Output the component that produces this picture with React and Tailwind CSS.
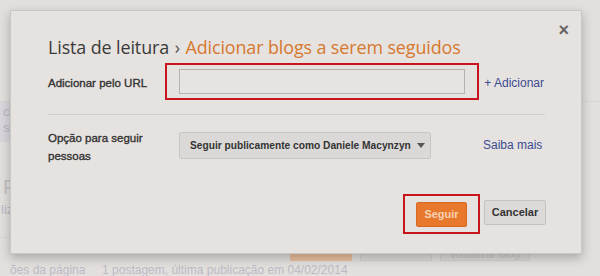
import React from "react";

const BackgroundPage = () => {
  return (
    <div className="h-[276px] w-[600px] bg-[#e2dfdc] text-[#b9b6c2] overflow-hidden">
      <div className="h-[28px]" />
      <div className="h-[74px] border-b border-[#d8d5d2]" />
      <div className="h-[40px] w-[40px] bg-[#d9d7dc] text-[13px] leading-[16px] pl-[3px] pt-[2px] font-['Liberation_Sans',sans-serif]">
        <div>c</div>
        <div>s</div>
      </div>
      <div className="h-[34px]" />
      <div className="pl-[3px] text-[20px] leading-[22px] text-[#c5c2c0] font-['Liberation_Sans',sans-serif]">F</div>
      <div className="pl-[1px] pt-[2px] text-[13px] text-[#bbb8c6] font-['Liberation_Sans',sans-serif]">liz</div>
      <div className="h-[18px] border-b border-[#d8d5d2] w-[40px]" />
      <div className="flex items-start gap-[8px] pl-[290px] pt-[9px]">
        <div className="h-[14px] w-[62px] bg-[#eabf9f]" />
        <div className="h-[14px] w-[72px] bg-[#dddbd9] border border-[#d3d1cf]" />
        <div className="h-[14px] w-[90px] bg-[#dddbd9] border border-[#d3d1cf] text-[11px] leading-[12px] text-[#c9c7c5] text-center font-['Liberation_Sans',sans-serif]">visualizar blog</div>
      </div>
      <div className="pl-[10px] pt-[2px] text-[12px] leading-[14px] text-[#bdbac6] font-['Liberation_Sans',sans-serif] whitespace-nowrap">
        ões da página &nbsp;&nbsp;&nbsp; 1 postagem, última publicação em 04/02/2014
      </div>
    </div>
  );
};

const App = () => {
  return (
    <div className="relative w-[600px] h-[276px] overflow-hidden font-['Liberation_Sans',sans-serif]">
      <BackgroundPage />

      {/* dialog */}
      <div className="absolute left-[10px] top-[10px] w-[572px] h-[244px] bg-[#e5e2df] border border-[#c9c6c3] shadow-[0_4px_10px_rgba(0,0,0,0.25)]">
        <button className="absolute right-[12px] top-[10px] text-[18px] leading-[18px] text-[#666] font-bold">×</button>

        <div className="pl-[37px] pt-[24px] pr-[37px]">
          <h2 className="text-[17.9px] leading-[24px] tracking-[-0.1px] font-['Open_Sans',sans-serif] text-[#3a3a3a] whitespace-nowrap">
            Lista de leitura <span className="text-[#555] px-[1px]">›</span>{" "}
            <span className="text-[#d7782e]">Adicionar blogs a serem seguidos</span>
          </h2>

          <div className="flex items-start mt-[4px]">
            <div className="w-[117px] pt-[12px] text-[11.5px] text-[#333] [-webkit-text-stroke:0.35px_#333] whitespace-nowrap">Adicionar pelo URL</div>
            <div className="border-2 border-[#c8141c] px-[12px] py-[4px] w-[315px]">
              <input type="text" className="block w-full h-[25px] bg-[#e6e3e0] border border-[#b5b3b1] outline-none" />
            </div>
            <a className="ml-[5px] pt-[11px] text-[12px] text-[#3c4a92] whitespace-nowrap">+ Adicionar</a>
          </div>

          <div className="h-px bg-[#cfccca] mt-[14px] w-[497px]" />

          <div className="flex items-start mt-[17px]">
            <div className="w-[131px] -mt-[3px] text-[11.5px] leading-[18px] text-[#333] [-webkit-text-stroke:0.35px_#333]">
              Opção para seguir<br />pessoas
            </div>
            <button className="h-[27px] w-[252px] flex items-center justify-between pl-[10px] pr-[11px] rounded-[2px] bg-[#dbd9d7] border border-[#c9c7c5] text-[10.2px] font-bold text-[#333] whitespace-nowrap">
              <span>Seguir publicamente como Daniele Macynzyn</span>
              <svg width="8" height="5" viewBox="0 0 8 5" className="shrink-0 ml-[6px]"><path d="M0 0 L8 0 L4 5 Z" fill="#555" /></svg>
            </button>
            <a className="ml-[52px] pt-[4px] text-[12px] text-[#3c4a92] whitespace-nowrap">Saiba mais</a>
          </div>

          <div className="flex items-start justify-end gap-[4px] mt-[29px] w-[498px]">
            <div className="border-2 border-[#c8141c] px-[11px] py-[5px]">
              <button className="h-[25px] w-[51px] bg-[#e8782c] border border-[#d66a22] rounded-[2px] text-[11px] font-bold text-[#f6d2b4]">Seguir</button>
            </div>
            <button className="mt-[6px] h-[25px] w-[62px] bg-[#dcdad8] border border-[#c4c2c0] rounded-[2px] text-[11px] font-bold text-[#333]">Cancelar</button>
          </div>
        </div>
      </div>
    </div>
  );
};

export default App;
